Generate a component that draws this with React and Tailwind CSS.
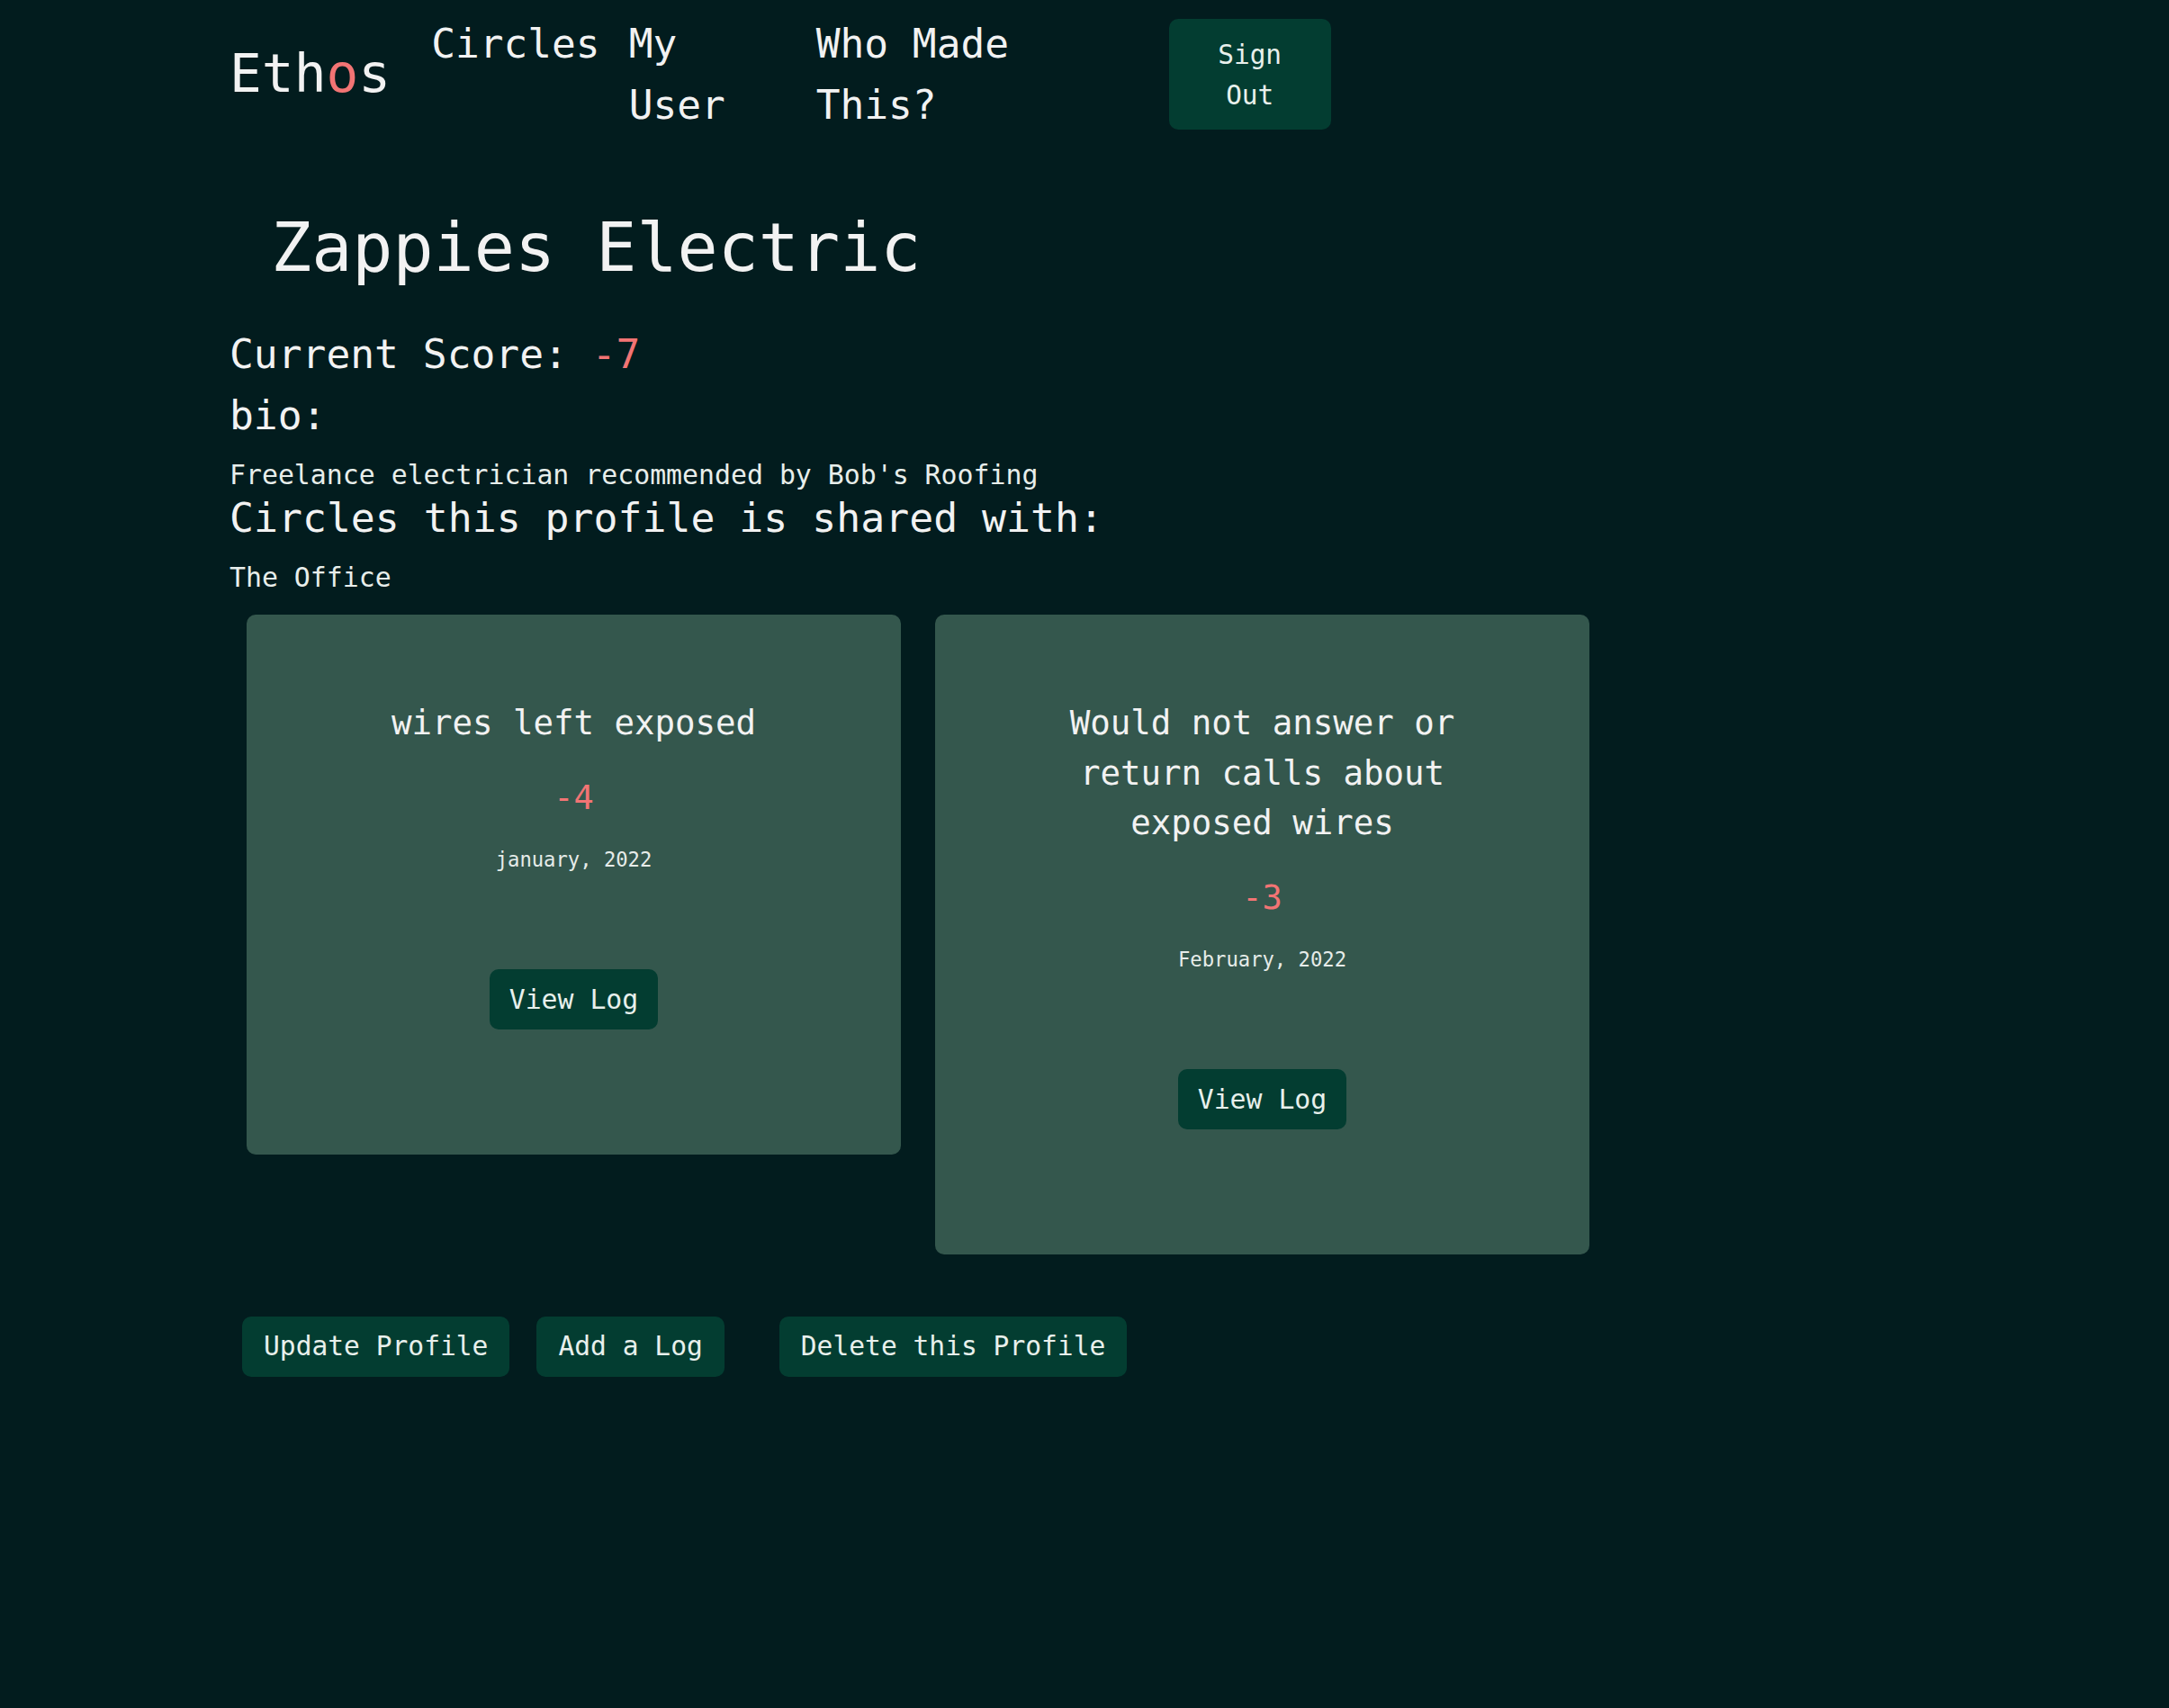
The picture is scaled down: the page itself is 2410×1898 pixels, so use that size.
import React from "react";

const mono = { fontFamily: '"DejaVu Sans Mono", "Liberation Mono", monospace' };

function Card({ title, score, date }) {
  return (
    <div className="mx-[19px] w-[727px] rounded-[10px] bg-[#34574d] px-[100px] pt-[93px] pb-[139px] text-center">
      <div className="text-[37.4px] leading-[55.5px] text-[#f2f2f2]">{title}</div>
      <div className="mt-[27px] text-[37px] leading-[55.5px] text-[#f27474]">{score}</div>
      <div className="mt-[25px] text-[22.2px] leading-[33px] text-[#e6ece9]">{date}</div>
      <button className="mt-[105px] rounded-[10px] bg-[#033d31] px-[22px] py-[11px] text-[29.8px] leading-[45px] text-[#e8f0ec]">
        View Log
      </button>
    </div>
  );
}

export default function App() {
  return (
    <div className="min-h-screen w-full bg-[#021c1e] text-[#f2f2f2]" style={mono}>
      <div className="pl-[255px]">
        <nav className="flex h-[164px] items-center">
          <div className="text-[59.5px] leading-[70px] text-[#f2f2f2]">
            Eth<span className="text-[#f27474]">o</span>s
          </div>
          <div className="ml-[45px] self-start pt-[15px] text-[44.5px] leading-[68px]">Circles</div>
          <div className="ml-[32px] w-[110px] self-start pt-[15px] text-[44.5px] leading-[68px]">My User</div>
          <div className="ml-[98px] w-[217px] self-start pt-[15px] text-[44.5px] leading-[68px]">Who Made This?</div>
          <button className="ml-[175px] w-[180px] rounded-[10px] bg-[#033d31] px-[30px] pt-[18px] pb-[15px] text-center text-[29.4px] leading-[45px] text-[#e8f0ec]">
            Sign Out
          </button>
        </nav>

        <h1 className="mt-[66px] pl-[46px] text-[75px] leading-[90px]">Zappies Electric</h1>

        <div className="mt-[40px] text-[44.6px] leading-[68px]">
          Current Score: <span className="text-[#f27474]">-7</span>
        </div>
        <div className="text-[44.6px] leading-[68px]">bio:</div>
        <p className="mt-[12px] text-[29.85px] leading-[40px] text-[#e8eeeb]">
          Freelance electrician recommended by Bob's Roofing
        </p>
        <div className="text-[44.8px] leading-[56px]">Circles this profile is shared with:</div>
        <p className="mt-[15px] text-[29.85px] leading-[45px] text-[#e8eeeb]">The Office</p>
      </div>

      <div className="mt-[19px] flex items-start pl-[255px]">
        <Card title="wires left exposed" score="-4" date="january, 2022" />
        <Card
          title="Would not answer or return calls about exposed wires"
          score="-3"
          date="February, 2022"
        />
      </div>

      <div className="mt-[69px] flex pl-[255px]">
        <button className="ml-[14px] rounded-[10px] bg-[#033d31] px-[24px] py-[11px] text-[29.6px] leading-[45px] text-[#e8f0ec]">
          Update Profile
        </button>
        <button className="ml-[30px] rounded-[10px] bg-[#033d31] px-[24px] py-[11px] text-[29.6px] leading-[45px] text-[#e8f0ec]">
          Add a Log
        </button>
        <button className="ml-[61px] rounded-[10px] bg-[#033d31] px-[24px] py-[11px] text-[29.6px] leading-[45px] text-[#e8f0ec]">
          Delete this Profile
        </button>
      </div>
    </div>
  );
}
